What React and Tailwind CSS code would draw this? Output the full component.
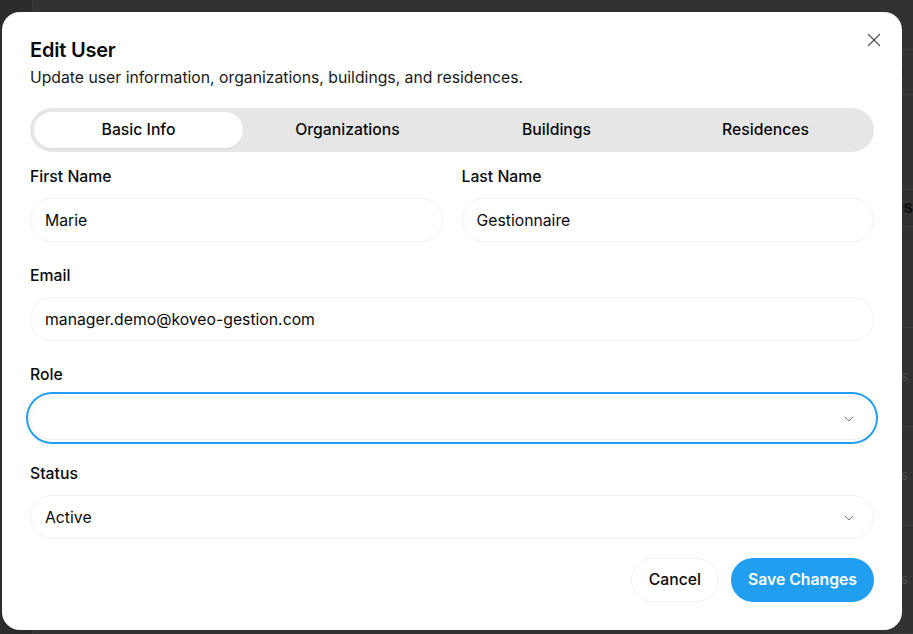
import React from "react";
import { X, ChevronDown } from "lucide-react";

function Field({ label, children }) {
  return (
    <div className="flex flex-col gap-3">
      <label className="text-[15.75px] leading-5 font-medium text-[#0a0a0a] pt-px -mb-px">{label}</label>
      {children}
    </div>
  );
}

function TextInput({ value }) {
  return (
    <div className="h-11 rounded-full border border-[#f1f1f1] bg-white pl-[14px] pt-px flex items-center text-[15.75px] text-[#0a0a0a]">
      {value}
    </div>
  );
}

function SelectBox({ value, focused }) {
  return (
    <div
      className={
        "h-11 rounded-full border bg-white pl-[14px] pr-4 pt-px flex items-center justify-between text-[15.75px] text-[#0a0a0a] " +
        (focused
          ? "border-[#f1f1f1] ring-2 ring-[#219ef0] ring-offset-2"
          : "border-[#f1f1f1]")
      }
    >
      <span>{value}</span>
      <ChevronDown size={16} className="text-[#7a7a7a]" strokeWidth={1.5} />
    </div>
  );
}

export default function App() {
  const rows = [
    { h: 50, t: "" },
    { h: 45, t: "o", cls: "text-[#111] text-[17px]" },
    { h: 95, t: "" },
    { h: 37, t: "es", cls: "text-[#111] font-bold text-[17px]" },
    { h: 101, t: "" },
    { h: 99, t: "es", cls: "text-[#4a4a4a] text-[13px]" },
    { h: 99, t: "es", cls: "text-[#4a4a4a] text-[13px]" },
    { h: 108, t: "es", cls: "text-[#4a4a4a] text-[13px]" },
  ];
  return (
    <div
      className="relative w-[913px] h-[634px] overflow-hidden bg-[#323232]"
      style={{ fontFamily: "Inter, 'Noto Sans', sans-serif" }}
    >
      {/* background page */}
      <div className="flex h-full">
        <div className="w-[41px] h-full bg-[#2c2c2c] border-r border-[#3a3a3a]" />
        <div className="flex-1 flex flex-col pl-[860px]">
          {rows.map((r, i) => (
            <div
              key={i}
              className="border-b border-[#3c3c3c] flex items-center whitespace-nowrap"
              style={{ height: r.h }}
            >
              <span className={r.cls}>{r.t}</span>
            </div>
          ))}
        </div>
      </div>

      {/* dialog */}
      <div className="absolute left-[2px] top-[12px] w-[900px] h-[618px] bg-white rounded-[18px] px-7 pt-6 pb-7 flex flex-col">
        <button className="absolute right-[17px] top-[17px] text-[#555]">
          <X size={22} strokeWidth={1.4} />
        </button>
        <h2 className="text-[20px] leading-7 font-semibold text-[#0a0a0a] tracking-[-0.2px]">Edit User</h2>
        <p className="mt-[4px] text-[15.75px] leading-5 text-[#1a1a1a]">
          Update user information, organizations, buildings, and residences.
        </p>

        <div className="mt-[20px] h-11 rounded-full bg-[#e6e6e6] p-1 grid grid-cols-4">
          {["Basic Info", "Organizations", "Buildings", "Residences"].map((t, i) => (
            <div
              key={t}
              className={
                "flex items-center justify-center rounded-full text-[15.75px] font-medium text-[#0a0a0a] " +
                (i === 0 ? "bg-white shadow-[0_1px_2px_rgba(0,0,0,0.05)]" : "")
              }
            >
              {t}
            </div>
          ))}
        </div>

        <div className="mt-[14px] flex flex-col gap-[23px]">
          <div className="grid grid-cols-2 gap-[19px]">
            <Field label="First Name">
              <TextInput value="Marie" />
            </Field>
            <Field label="Last Name">
              <TextInput value="Gestionnaire" />
            </Field>
          </div>
          <Field label="Email">
            <TextInput value="manager.demo@koveo-gestion.com" />
          </Field>
          <Field label="Role">
            <SelectBox value="" focused />
          </Field>
          <Field label="Status">
            <SelectBox value="Active" />
          </Field>
        </div>

        <div className="mt-auto flex justify-end gap-3">
          <button className="h-11 px-[17px] rounded-full border border-[#f1f1f1] bg-white text-[15.75px] font-medium text-[#0a0a0a]">
            Cancel
          </button>
          <button className="h-11 px-[17px] rounded-full bg-[#219ef0] text-[15.75px] font-semibold text-white">
            Save Changes
          </button>
        </div>
      </div>
    </div>
  );
}
